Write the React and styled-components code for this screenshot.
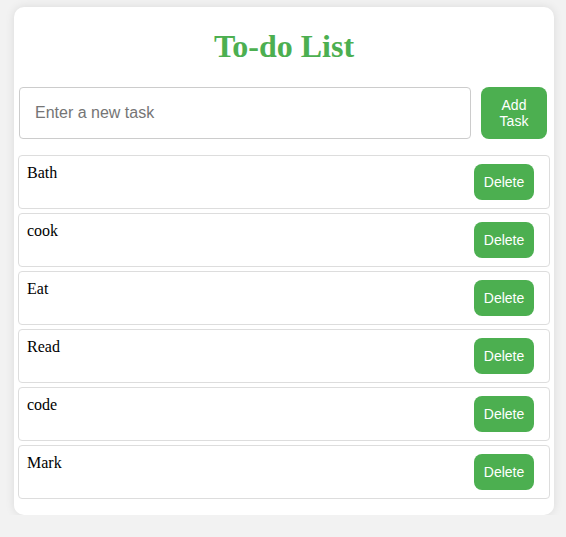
import React, { useState } from 'react';
import styled, { createGlobalStyle } from 'styled-components';

const GlobalStyle = createGlobalStyle`
  body {
    margin: 0;
    background: #f2f2f2;
    font-family: "Liberation Serif", "Times New Roman", serif;
  }
`;

const green = '#4caf50';

const Card = styled.div`
  display: flow-root;
  width: 540px;
  box-sizing: border-box;
  margin: 7px 0 0 14px;
  padding: 0 4px 16px;
  background: #fff;
  border-radius: 10px;
  box-shadow: 0 0 10px rgba(0, 0, 0, 0.1);
`;

const Title = styled.h1`
  margin: 21px 0 22px;
  text-align: center;
  color: ${green};
  font-size: 32px;
  font-weight: bold;
`;

const InputRow = styled.div`
  display: flex;
  gap: 10px;
  padding: 0 3px 0 1px;
  margin-bottom: 16px;
`;

const TaskInput = styled.input`
  flex: 1;
  height: 52px;
  box-sizing: border-box;
  padding: 0 15px;
  border: 1px solid #ccc;
  border-radius: 4px;
  font-family: "Liberation Sans", Arial, sans-serif;
  font-size: 16px;
  outline: none;
`;

const GreenButton = styled.button`
  background: ${green};
  color: #fff;
  border: none;
  border-radius: 8px;
  font-family: "Liberation Sans", Arial, sans-serif;
  font-size: 14px;
  cursor: pointer;
`;

const AddButton = styled(GreenButton)`
  width: 66px;
  height: 52px;
  padding: 0 10px;
  line-height: 16px;
`;

const List = styled.ul`
  list-style: none;
  margin: 0;
  padding: 0;
  display: flex;
  flex-direction: column;
  gap: 4px;
`;

const Item = styled.li`
  display: flex;
  justify-content: space-between;
  align-items: flex-start;
  padding: 8px;
  border: 1px solid #ddd;
  border-radius: 4px;
  font-size: 16px;
  color: #000;
`;

const DeleteButton = styled(GreenButton)`
  width: 60px;
  height: 36px;
  margin-right: 7px;
  padding: 0;
`;

export default function App() {
  const [tasks, setTasks] = useState(['Bath', 'cook', 'Eat', 'Read', 'code', 'Mark']);
  const [text, setText] = useState('');

  const addTask = () => {
    if (!text.trim()) return;
    setTasks([...tasks, text.trim()]);
    setText('');
  };

  return (
    <>
      <GlobalStyle />
      <Card>
        <Title>To-do List</Title>
        <InputRow>
          <TaskInput
            placeholder='Enter a new task'
            value={text}
            onChange={(e) => setText(e.target.value)}
          />
          <AddButton onClick={addTask}>Add Task</AddButton>
        </InputRow>
        <List>
          {tasks.map((t, i) => (
            <Item key={i}>
              <span>{t}</span>
              <DeleteButton onClick={() => setTasks(tasks.filter((_, j) => j !== i))}>
                Delete
              </DeleteButton>
            </Item>
          ))}
        </List>
      </Card>
    </>
  );
}
